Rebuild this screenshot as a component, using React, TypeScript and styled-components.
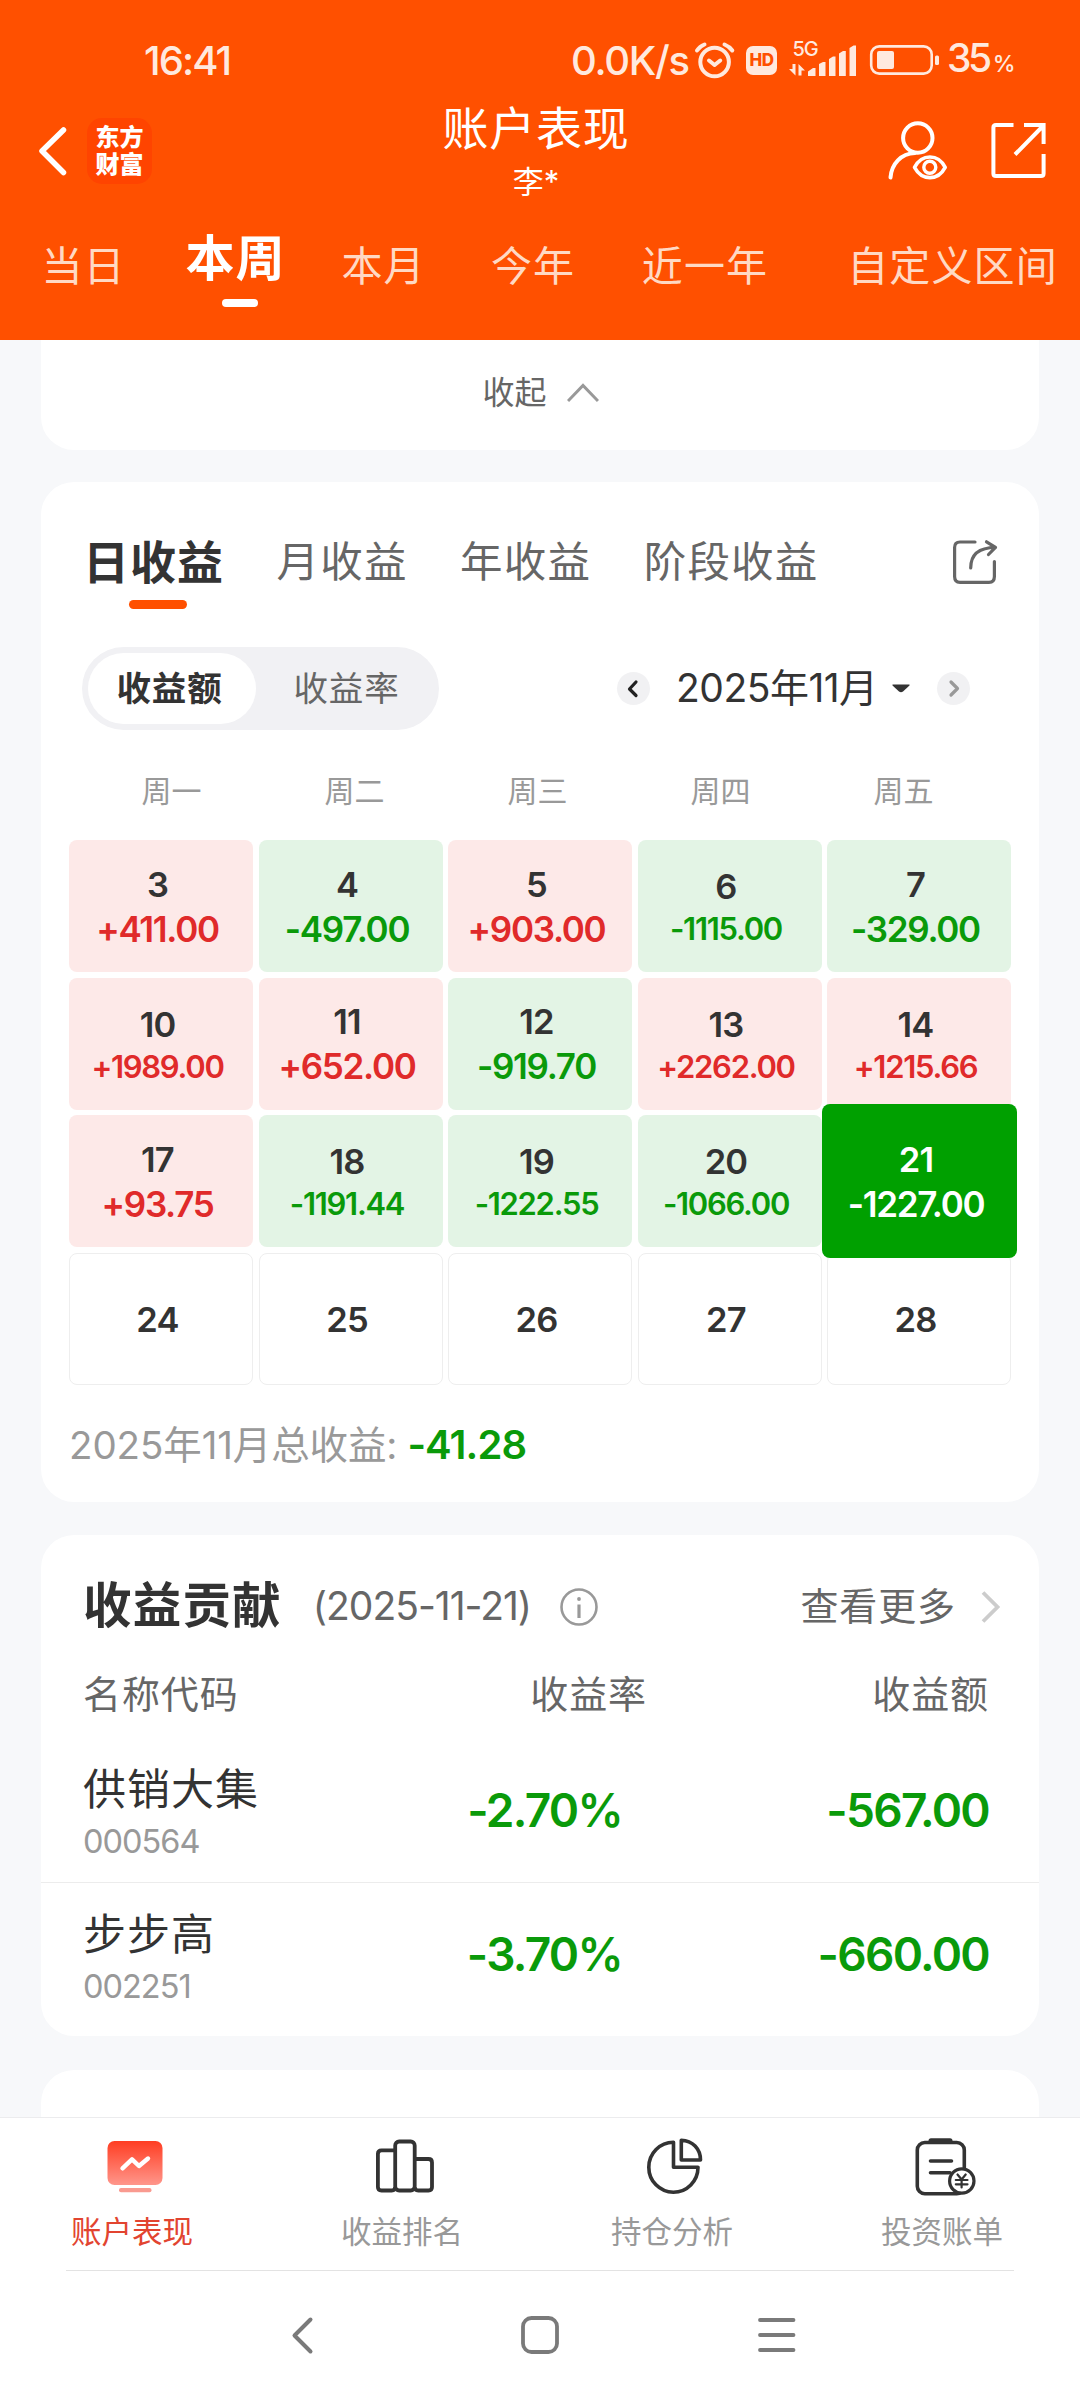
import React from "react";
import styled, { createGlobalStyle, css } from "styled-components";

const UP = "#e02a2a";
const DOWN = "#0a9a0a";
const ORANGE = "#ff5000";
const STATUS = "#ffe9de";

const Global = createGlobalStyle`
  * { box-sizing: border-box; }
  body {
    margin: 0;
    background: #f7f8fa;
    font-family: Inter, "Noto Sans CJK SC", sans-serif;
    line-height: 1.25;
    color: #333;
  }
  svg { display: block; flex: none; }
`;

const Screen = styled.div`
  width: 1080px;
  height: 2400px;
  display: flex;
  flex-direction: column;
  overflow: hidden;
  white-space: nowrap;
`;

/* ---------- header ---------- */

const Header = styled.header`
  flex: none;
  height: 340px;
  background: ${ORANGE};
  color: #fff;
`;

const StatusBar = styled.div`
  height: 101px;
  padding: 20px 69px 0 144px;
  display: flex;
  align-items: center;
  color: ${STATUS};
  font-size: 40px;
  font-weight: 500;
  line-height: 50px;
`;

const Clock = styled.span`
  letter-spacing: -1.9px;
  margin-right: auto;
`;

const Speed = styled.span`
  width: 121px;
  letter-spacing: -1.3px;
`;

const HdBadge = styled.span`
  width: 31px;
  height: 29px;
  margin: 0 12px 0 9px;
  border-radius: 7px;
  background: ${STATUS};
  color: ${ORANGE};
  font-size: 17px;
  font-weight: 800;
  line-height: 29px;
  text-align: center;
  letter-spacing: -0.5px;
`;

const Battery = styled.span`
  width: 64px;
  margin-left: 6px;
  font-size: 39px;
  letter-spacing: -3.4px;
  small {
    font-size: 23px;
    margin-left: 4px;
    letter-spacing: 0;
  }
`;

const TitleBar = styled.div`
  height: 108px;
  padding: 0 32px 0 36px;
  display: grid;
  grid-template-columns: 1fr auto 1fr;
`;

const BarSide = styled.div<{ $end?: boolean }>`
  display: flex;
  align-items: center;
  gap: ${(p) => (p.$end ? 37 : 17)}px;
  justify-content: ${(p) => (p.$end ? "flex-end" : "flex-start")};
  padding-bottom: 8px;
`;

const Logo = styled.div`
  width: 65px;
  height: 66px;
  border-radius: 15px;
  background: #ff4400;
  padding: 6px 0 0 0;
  font-size: 24px;
  font-weight: 900;
  line-height: 27px;
  text-align: center;
`;

const Titles = styled.div`
  text-align: center;
  padding-right: 12px;
`;

const Title = styled.h1`
  margin: 0;
  font-size: 46px;
  font-weight: 400;
  line-height: 54px;
  letter-spacing: 0.7px;
`;

const Subtitle = styled.div`
  font-size: 31px;
  line-height: 54px;
`;

const RangeTabs = styled.nav`
  display: grid;
  grid-template-columns: 167px 137px 159px 140px 204px 291px;
  height: 131px;
  overflow: hidden;
`;

const RangeTab = styled.div<{ $active?: boolean }>`
  display: flex;
  flex-direction: column;
  align-items: center;
  padding-top: 27px;
  font-size: 41px;
  line-height: 60px;
  letter-spacing: 1.1px;
  color: #ffd9c4;
  ${(p) =>
    p.$active &&
    css`
      padding-top: 20px;
      font-size: 49px;
      font-weight: 700;
      color: #fff;
    `}
`;

const Underline = styled.i<{ $w: number; $h: number; $gap: number; $c: string }>`
  width: ${(p) => p.$w}px;
  height: ${(p) => p.$h}px;
  margin: ${(p) => p.$gap}px 0 0 8px;
  border-radius: 5px;
  background: ${(p) => p.$c};
`;

/* ---------- content ---------- */

const Content = styled.main`
  height: 1777px;
  flex: none;
  padding: 0 41px;
  overflow: hidden;
  background: #f7f8fa;
`;

const Card = styled.section<{ $h: number; $gap?: number; $open?: boolean }>`
  height: ${(p) => p.$h}px;
  margin-top: ${(p) => p.$gap ?? 0}px;
  border-radius: ${(p) => (p.$open ? "0 0 33px 33px" : "33px")};
  background: #fff;
`;

const Collapse = styled.div`
  display: flex;
  justify-content: center;
  align-items: center;
  height: 105px;
  gap: 20px;
  padding-left: 1px;
  font-size: 32px;
  color: #666;
`;

const PeriodRow = styled.div`
  display: flex;
  height: 165px;
  padding: 51px 40px 0 42px;
`;

const PeriodTab = styled.div<{ $active?: boolean }>`
  display: flex;
  flex-direction: column;
  align-items: center;
  margin-right: 52.5px;
  font-size: 42.5px;
  line-height: 58px;
  letter-spacing: 1.2px;
  color: #666;
  ${(p) =>
    p.$active &&
    css`
      font-size: 46px;
      letter-spacing: 1px;
      font-weight: 700;
      color: #333;
    `}
`;

const ShareSlot = styled.div`
  margin: 5px 0 0 auto;
`;

const FilterRow = styled.div`
  display: flex;
  align-items: center;
  height: 83px;
  padding: 0 69px 0 41px;
`;

const Segmented = styled.div`
  display: flex;
  width: 357px;
  height: 83px;
  padding: 6px;
  border-radius: 42px;
  background: #f1f1f4;
  margin-right: auto;
`;

const Segment = styled.div<{ $active?: boolean }>`
  width: ${(p) => (p.$active ? 168 : 177)}px;
  padding: ${(p) => (p.$active ? "0 5px 0 0" : "0 0 0 4px")};
  border-radius: 36px;
  text-align: center;
  font-size: 34.5px;
  line-height: 71px;
  letter-spacing: 0.8px;
  font-weight: ${(p) => (p.$active ? 700 : 400)};
  color: ${(p) => (p.$active ? "#333" : "#666")};
  background: ${(p) => (p.$active ? "#fff" : "transparent")};
`;

const RoundButton = styled.div`
  width: 33px;
  height: 33px;
  border-radius: 50%;
  background: #f1f1f3;
`;

const MonthLabel = styled.div`
  width: 216px;
  margin-left: 26px;
  padding-bottom: 1px;
  font-size: 39px;
  letter-spacing: -0.5px;
`;

const CaretSlot = styled.div`
  margin-right: 27px;
`;

const Weekdays = styled.div`
  display: grid;
  grid-template-columns: repeat(5, 183px);
  height: 110px;
  padding: 12px 0 0 39px;
  text-align: center;
  font-size: 30px;
  line-height: 98px;
  color: #999;
`;

const Calendar = styled.div`
  display: grid;
  grid-template-columns: repeat(5, 184px);
  grid-auto-rows: 132px;
  gap: 5.6px 5.5px;
  padding-left: 28px;
`;

type Tone = "up" | "down" | "none" | "active";

const tones = {
  up: css`
    background: #fde9e8;
    color: ${UP};
  `,
  down: css`
    background: #e3f4e5;
    color: ${DOWN};
  `,
  none: css`
    border: 1px solid #eeeeee;
    color: #333;
  `,
  active: css`
    background: #00a000;
    color: #fff;
    margin: -11px -6px -11px -5px;
    z-index: 1;
  `,
};

const Day = styled.div<{ $tone: Tone }>`
  display: flex;
  flex-direction: column;
  align-items: center;
  justify-content: center;
  padding: 1px 7px 0 0;
  border-radius: 8px;
  font-weight: 600;
  ${(p) => tones[p.$tone]}
`;

const DayNumber = styled.span<{ $white?: boolean }>`
  font-size: 34.5px;
  line-height: 45px;
  letter-spacing: -0.8px;
  color: ${(p) => (p.$white ? "#fff" : "#333")};
`;

const Amount = styled.span<{ $small: boolean }>`
  font-size: ${(p) => (p.$small ? 31 : 35)}px;
  line-height: ${(p) => (p.$small ? 40 : 45)}px;
  letter-spacing: -1.3px;
`;

const Summary = styled.div`
  padding: 1px 0 0 28px;
  font-size: 38.5px;
  line-height: 117px;
  letter-spacing: -0.1px;
  color: #999;
  b {
    margin-left: 10px;
    font-size: 40px;
    font-weight: 600;
    letter-spacing: -0.9px;
    color: ${DOWN};
  }
`;

const ContribHead = styled.div`
  display: flex;
  align-items: center;
  height: 143px;
  padding: 0 38px 0 42px;
  color: #666;
  font-size: 38px;
  letter-spacing: 0.9px;
`;

const ContribTitle = styled.h2`
  margin: 0;
  font-size: 48.5px;
  font-weight: 700;
  letter-spacing: 1.2px;
  color: #333;
`;

const ContribDate = styled.span`
  margin: 0 29px 0 31px;
  font-size: 39px;
  letter-spacing: -1px;
`;

const More = styled.span`
  margin: 0 25px 0 auto;
`;

const TableHead = styled.div`
  display: grid;
  grid-template-columns: 300px 264px 1fr;
  align-items: center;
  height: 60px;
  margin: -13px 0 13px;
  padding: 0 50px 0 42px;
  font-size: 38px;
  letter-spacing: 0.9px;
  color: #666;
`;

const TableRow = styled.div`
  display: grid;
  grid-template-columns: 300px 239px 1fr;
  align-items: center;
  height: 144px;
  padding: 0 50px 0 42px;
  & + & {
    border-top: 1px solid #ececec;
  }
`;

const Right = styled.span`
  text-align: right;
`;

const StockCell = styled.div`
  padding-top: 7px;
`;

const StockName = styled.div`
  font-size: 43px;
  line-height: 57px;
  letter-spacing: 1px;
`;

const StockCode = styled.div`
  font-size: 32.5px;
  line-height: 48px;
  letter-spacing: -1px;
  color: #999;
`;

const Value = styled(Right)`
  padding-top: 1px;
  font-size: 46px;
  font-weight: 600;
  letter-spacing: -1.7px;
  color: ${DOWN};
`;

/* ---------- footer ---------- */

const TabBar = styled.footer`
  flex: none;
  display: grid;
  grid-template-columns: repeat(4, 270px);
  height: 153px;
  border-top: 1px solid #ececee;
  background: #fff;
`;

const TabItem = styled.div<{ $active?: boolean }>`
  display: flex;
  flex-direction: column;
  align-items: center;
  padding-top: 17px;
  font-size: 30.5px;
  line-height: 40px;
  color: ${(p) => (p.$active ? "#e24430" : "#999")};
  span {
    padding-right: 6px;
    margin-top: 15px;
  }
`;

const SystemNav = styled.div`
  flex: none;
  height: 130px;
  padding: 0 66px;
  background: #fff;
`;

const NavInner = styled.div`
  height: 129px;
  border-top: 1px solid #e3e3e3;
  display: flex;
  align-items: center;
  padding-left: 224px;
`;

const NavButton = styled.div<{ $gap?: number }>`
  margin-left: ${(p) => p.$gap ?? 0}px;
`;

const days: [number, string?][] = [
  [3, "+411.00"], [4, "-497.00"], [5, "+903.00"], [6, "-1115.00"], [7, "-329.00"],
  [10, "+1989.00"], [11, "+652.00"], [12, "-919.70"], [13, "+2262.00"], [14, "+1215.66"],
  [17, "+93.75"], [18, "-1191.44"], [19, "-1222.55"], [20, "-1066.00"], [21, "-1227.00"],
  [24], [25], [26], [27], [28],
];

const selectedDay = 21;

const toneOf = (day: number, amount?: string): Tone => {
  if (day === selectedDay) return "active";
  if (!amount) return "none";
  return amount.startsWith("+") ? "up" : "down";
};

const stocks = [
  { name: "供销大集", code: "000564", rate: "-2.70%", amount: "-567.00" },
  { name: "步步高", code: "002251", rate: "-3.70%", amount: "-660.00" },
];

const Alarm = () => (
  <svg width="45" height="40" viewBox="692 41 45 40" fill="none" stroke={STATUS} strokeWidth="4" strokeLinecap="round">
    <circle cx="714.6" cy="62" r="14.3" />
    <path d="M709 60.500l5.600 4.500l5.600-4.500" strokeLinejoin="round" />
    <path d="M697 50.500Q699.500 46.500 704.500 44.500M732.300 50.500Q729.500 46.500 724.500 44.500" />
  </svg>
);

const Signal = () => (
  <svg width="80" height="60" viewBox="789 31 80 60" fill={STATUS}>
    <text x="792.500" y="56" fontSize="20" fontWeight="500" letterSpacing="-1">5G</text>
    <path d="M792.500 64h3v11.500l-6.500-6.500h3.500zM798.500 75.500V64l6.500 6.500h-3.500v5z" />
    <path d="M808 76v-4.500l5-3.500h2.500v8zM819 76V64l4-2h2.500v14zM829 76V59l4-2.500h2.500V76zM839 76V53.500l4-2.500h2.800v25zM849.500 76V48l4-2.500h2.500V76z" />
  </svg>
);

const BatteryIcon = () => (
  <svg width="72" height="40" viewBox="869 41 72 40">
    <rect x="871.200" y="46.400" width="60.500" height="27.200" rx="8" fill="none" stroke={STATUS} strokeWidth="2.600" />
    <rect x="877" y="51" width="17" height="18" rx="2" fill={STATUS} />
    <rect x="935" y="55.500" width="4" height="9.500" rx="1.500" fill={STATUS} />
  </svg>
);

const Back = () => (
  <svg width="34" height="60" viewBox="36 121 34 60" fill="none" stroke="#fff" strokeWidth="5.500" strokeLinecap="round" strokeLinejoin="round">
    <path d="M63.500 130L42 151L63.500 172.500" />
  </svg>
);

const UserEye = () => (
  <svg width="64" height="66" viewBox="887 118 64 66" fill="none" stroke="#fff" strokeWidth="4" strokeLinecap="round" strokeLinejoin="round">
    <circle cx="917.800" cy="138" r="14.700" />
    <path d="M890.500 177.500C891.500 164 901 153.500 915 153" />
    <path d="M914.500 167.300C922 153.500 938 153.500 945.200 167.300C938 181 922 181 914.500 167.300Z" strokeWidth="3.600" />
    <circle cx="929.800" cy="167.300" r="6" strokeWidth="3.400" />
  </svg>
);

const Export = () => (
  <svg width="60" height="66" viewBox="988 118 60 66" fill="none" stroke="#fff" strokeWidth="4">
    <path d="M1013.500 125H996Q993.400 125 993.400 127.600V173.500Q993.400 176 996 176H1041Q1043.600 176 1043.600 173.500V154" />
    <path d="M1024 125H1043.600V144M1042.500 126.500L1015 154.500" />
  </svg>
);

const Share = () => (
  <svg width="48" height="48" viewBox="951 538 48 48" fill="none" stroke="#666" strokeWidth="3.200" strokeLinecap="round" strokeLinejoin="round">
    <path d="M975 542H960Q954.600 542 954.600 547.500V576.500Q954.600 582.300 960 582.300H989Q994.400 582.300 994.400 576.500V561.500" />
    <path d="M970.700 568C970.700 554 979 547.500 995.500 547.500M986.500 541.800L995.500 547.300L988.500 554.500" />
  </svg>
);

const Chevron = ({ left, color }: { left?: boolean; color: string }) => (
  <svg width="33" height="33" viewBox="0 0 33 33" fill="none" stroke={color} strokeWidth="3.200" strokeLinecap="round" strokeLinejoin="round">
    <path d={left ? "M19 10L12.500 17L19 23.500" : "M14 10L20.500 16.500L14 23"} />
  </svg>
);

const PerformanceIcon = () => (
  <svg width="62" height="62" viewBox="104 2135 62 62">
    <defs>
      <linearGradient id="screen" x1="0" y1="0" x2="0" y2="1">
        <stop offset="0" stopColor="#ff3d22" />
        <stop offset="1" stopColor="#ff968b" />
      </linearGradient>
    </defs>
    <rect x="107.500" y="2141" width="55" height="44" rx="7" fill="url(#screen)" />
    <rect x="119" y="2188" width="32.500" height="4.300" rx="2" fill="#f99a90" />
    <path d="M122.500 2168.300L132 2159.300L139 2166L148 2158.500" fill="none" stroke="#fff" strokeWidth="4.400" strokeLinecap="round" strokeLinejoin="round" />
  </svg>
);

const RankIcon = () => (
  <svg width="62" height="62" viewBox="374 2135 62 62" fill="none" stroke="#333" strokeWidth="3.800">
    <path d="M395.200 2150.400H381.500Q377.900 2150.400 377.900 2154V2187Q377.900 2190.500 381.500 2190.500H391.700Q395.200 2190.500 395.200 2187" />
    <rect x="395.200" y="2141.500" width="19.500" height="49" rx="4" />
    <path d="M414.700 2159H428.500Q432 2159 432 2162.500V2187Q432 2190.500 428.500 2190.500H418.300Q414.700 2190.500 414.700 2187" />
  </svg>
);

const PieIcon = () => (
  <svg width="62" height="62" viewBox="644 2135 62 62" fill="none" stroke="#333" strokeWidth="3.600" strokeLinejoin="round">
    <path d="M673.500 2142.200A24.600 25 0 1 0 698 2167.200H673.500Z" />
    <path d="M681.300 2140.200V2160H700.500C700.500 2149 692.500 2140.500 681.300 2140.200Z" />
  </svg>
);

const BillIcon = () => (
  <svg width="62" height="62" viewBox="914 2135 62 62" fill="none" stroke="#333" strokeWidth="3.600" strokeLinecap="round">
    <rect x="917.300" y="2142.500" width="47" height="51.200" rx="7.500" />
    <path d="M931 2140.800H950" strokeWidth="5" />
    <path d="M930.500 2161H951.500M930.500 2172.700H950" />
    <circle cx="961.800" cy="2181" r="12.200" fill="#fff" strokeWidth="3.200" />
    <path d="M957.500 2174.500L961.600 2179.500L965.700 2174.500M961.600 2179.500V2187.500M955.800 2180H967.500M955.800 2184.300H967.500" strokeWidth="2.200" />
  </svg>
);

export default function App() {
  return (
    <>
      <Global />
      <Screen>
        <Header>
          <StatusBar>
            <Clock>16:41</Clock>
            <Speed>0.0K/s</Speed>
            <Alarm />
            <HdBadge>HD</HdBadge>
            <Signal />
            <BatteryIcon />
            <Battery>35<small>%</small></Battery>
          </StatusBar>
          <TitleBar>
            <BarSide>
              <Back />
              <Logo>东方<br />财富</Logo>
            </BarSide>
            <Titles>
              <Title>账户表现</Title>
              <Subtitle>李*</Subtitle>
            </Titles>
            <BarSide $end>
              <UserEye />
              <Export />
            </BarSide>
          </TitleBar>
          <RangeTabs>
            <RangeTab>当日</RangeTab>
            <RangeTab $active>
              本周
              <Underline $w={36} $h={8} $gap={10} $c="#fff" />
            </RangeTab>
            <RangeTab>本月</RangeTab>
            <RangeTab>今年</RangeTab>
            <RangeTab>近一年</RangeTab>
            <RangeTab>自定义区间</RangeTab>
          </RangeTabs>
        </Header>

        <Content>
          <Card $h={110} $open>
            <Collapse>
              收起
              <svg width="32" height="22" viewBox="0 0 32 22" fill="none" stroke="#999" strokeWidth="3">
                <path d="M1 19L16 3.500L31 19" />
              </svg>
            </Collapse>
          </Card>

          <Card $h={1020} $gap={32}>
            <PeriodRow>
              <PeriodTab $active>
                日收益
                <Underline $w={58} $h={9} $gap={9} $c={ORANGE} />
              </PeriodTab>
              <PeriodTab>月收益</PeriodTab>
              <PeriodTab>年收益</PeriodTab>
              <PeriodTab>阶段收益</PeriodTab>
              <ShareSlot><Share /></ShareSlot>
            </PeriodRow>
            <FilterRow>
              <Segmented>
                <Segment $active>收益额</Segment>
                <Segment>收益率</Segment>
              </Segmented>
              <RoundButton><Chevron left color="#222" /></RoundButton>
              <MonthLabel>2025年11月</MonthLabel>
              <CaretSlot>
                <svg width="18" height="9" viewBox="0 0 18 9" fill="#333">
                  <path d="M0.500 0.500H17.500V1.500L11 7.500Q9 9 7 7.500L0.500 1.500Z" />
                </svg>
              </CaretSlot>
              <RoundButton><Chevron color="#999" /></RoundButton>
            </FilterRow>
            <Weekdays>
              {["周一", "周二", "周三", "周四", "周五"].map((d) => <span key={d}>{d}</span>)}
            </Weekdays>
            <Calendar>
              {days.map(([day, amount]) => (
                <Day key={day} $tone={toneOf(day, amount)}>
                  <DayNumber $white={day === selectedDay}>{day}</DayNumber>
                  {amount && (
                    <Amount $small={amount.length > 7 && day !== selectedDay}>{amount}</Amount>
                  )}
                </Day>
              ))}
            </Calendar>
            <Summary>2025年11月总收益:<b>-41.28</b></Summary>
          </Card>

          <Card $h={501} $gap={33}>
            <ContribHead>
              <ContribTitle>收益贡献</ContribTitle>
              <ContribDate>(2025-11-21)</ContribDate>
              <svg width="38" height="38" viewBox="0 0 38 38" fill="none" stroke="#999" strokeWidth="2.600">
                <circle cx="19" cy="19" r="17.500" />
                <path d="M19 16.500V30" strokeWidth="3.200" />
                <circle cx="19" cy="11" r="1.900" fill="#999" stroke="none" />
              </svg>
              <More>查看更多</More>
              <svg width="20" height="34" viewBox="0 0 20 34" fill="none" stroke="#ccc" strokeWidth="3.800">
                <path d="M2 2.500L16.500 17L2 31.500" />
              </svg>
            </ContribHead>
            <TableHead>
              <span>名称代码</span>
              <Right>收益率</Right>
              <Right>收益额</Right>
            </TableHead>
            {stocks.map((s) => (
              <TableRow key={s.code}>
                <StockCell>
                  <StockName>{s.name}</StockName>
                  <StockCode>{s.code}</StockCode>
                </StockCell>
                <Value>{s.rate}</Value>
                <Value>{s.amount}</Value>
              </TableRow>
            ))}
          </Card>

          <Card $h={200} $gap={34} />
        </Content>

        <TabBar>
          <TabItem $active><PerformanceIcon /><span>账户表现</span></TabItem>
          <TabItem><RankIcon /><span>收益排名</span></TabItem>
          <TabItem><PieIcon /><span>持仓分析</span></TabItem>
          <TabItem><BillIcon /><span>投资账单</span></TabItem>
        </TabBar>
        <SystemNav>
          <NavInner>
            <NavButton>
              <svg width="26" height="42" viewBox="290 2314 26 42" fill="none" stroke="#7a7a7a" strokeWidth="4" strokeLinecap="round" strokeLinejoin="round">
                <path d="M310.500 2319.500L294.500 2335.500L310.500 2351.500" />
              </svg>
            </NavButton>
            <NavButton $gap={205}>
              <svg width="38" height="38" viewBox="0 0 38 38" fill="none" stroke="#7a7a7a" strokeWidth="3.800">
                <rect x="2" y="2" width="34" height="34" rx="8.500" />
              </svg>
            </NavButton>
            <NavButton $gap={199}>
              <svg width="38" height="38" viewBox="0 0 38 38" fill="none" stroke="#7a7a7a" strokeWidth="3.800" strokeLinecap="round">
                <path d="M2 4H35.500M2 19H35.500M2 34H35.500" />
              </svg>
            </NavButton>
          </NavInner>
        </SystemNav>
      </Screen>
    </>
  );
}
